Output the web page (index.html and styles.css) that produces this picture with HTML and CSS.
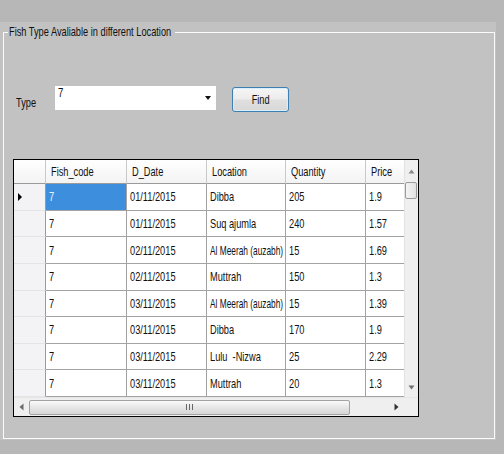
FILE: index.html
```html
<!DOCTYPE html>
<html>
<head>
<meta charset="utf-8">
<title>Fish Type</title>
<link rel="stylesheet" href="styles.css">
</head>
<body>
<div class="client">
  <fieldset class="group">
    <legend class="group-title"><span class="tx">Fish Type Avaliable in different Location</span></legend>
    <div class="search-row">
      <label class="type-label"><span class="tx">Type</span></label>
      <div class="combo"><span class="tx combo-value">7</span><span class="combo-arrow"></span></div>
      <button class="find-btn"><span class="tx tx-c">Find</span></button>
    </div>
    <div class="grid-view">
      <div class="grid-body">
        <div class="cells">
          <div class="hdr corner-hdr"></div>
          <div class="hdr"><span class="tx">Fish_code</span></div>
          <div class="hdr"><span class="tx">D_Date</span></div>
          <div class="hdr"><span class="tx">Location</span></div>
          <div class="hdr"><span class="tx">Quantity</span></div>
          <div class="hdr last"><span class="tx">Price</span></div>

          <div class="rowhdr"><span class="current"></span></div>
          <div class="cell selected"><span class="tx">7</span></div><div class="cell"><span class="tx">01/11/2015</span></div><div class="cell"><span class="tx">Dibba</span></div><div class="cell"><span class="tx">205</span></div><div class="cell last"><span class="tx">1.9</span></div>

          <div class="rowhdr"></div>
          <div class="cell"><span class="tx">7</span></div><div class="cell"><span class="tx">01/11/2015</span></div><div class="cell"><span class="tx">Suq ajumla</span></div><div class="cell"><span class="tx">240</span></div><div class="cell last"><span class="tx">1.57</span></div>

          <div class="rowhdr"></div>
          <div class="cell"><span class="tx">7</span></div><div class="cell"><span class="tx">02/11/2015</span></div><div class="cell"><span class="tx tx-tight">Al Meerah (auzabh)</span></div><div class="cell"><span class="tx">15</span></div><div class="cell last"><span class="tx">1.69</span></div>

          <div class="rowhdr"></div>
          <div class="cell"><span class="tx">7</span></div><div class="cell"><span class="tx">02/11/2015</span></div><div class="cell"><span class="tx">Muttrah</span></div><div class="cell"><span class="tx">150</span></div><div class="cell last"><span class="tx">1.3</span></div>

          <div class="rowhdr"></div>
          <div class="cell"><span class="tx">7</span></div><div class="cell"><span class="tx">03/11/2015</span></div><div class="cell"><span class="tx tx-tight">Al Meerah (auzabh)</span></div><div class="cell"><span class="tx">15</span></div><div class="cell last"><span class="tx">1.39</span></div>

          <div class="rowhdr"></div>
          <div class="cell"><span class="tx">7</span></div><div class="cell"><span class="tx">03/11/2015</span></div><div class="cell"><span class="tx">Dibba</span></div><div class="cell"><span class="tx">170</span></div><div class="cell last"><span class="tx">1.9</span></div>

          <div class="rowhdr"></div>
          <div class="cell"><span class="tx">7</span></div><div class="cell"><span class="tx">03/11/2015</span></div><div class="cell"><span class="tx">Lulu &nbsp;-Nizwa</span></div><div class="cell"><span class="tx">25</span></div><div class="cell last"><span class="tx">2.29</span></div>

          <div class="rowhdr"></div>
          <div class="cell"><span class="tx">7</span></div><div class="cell"><span class="tx">03/11/2015</span></div><div class="cell"><span class="tx">Muttrah</span></div><div class="cell"><span class="tx">20</span></div><div class="cell last"><span class="tx">1.3</span></div>
        </div>
        <div class="vscroll">
          <div class="sb-btn sb-up"><svg width="7" height="5" viewBox="0 0 7 5"><path d="M0.5 4.5 L3.5 0.5 L6.5 4.5 Z" fill="#8a8a8a"/></svg></div>
          <div class="v-thumb"></div>
          <div class="v-track"></div>
          <div class="sb-btn sb-down"><svg width="7" height="5" viewBox="0 0 7 5"><path d="M0.5 0.5 L3.5 4.5 L6.5 0.5 Z" fill="#707070"/></svg></div>
        </div>
      </div>
      <div class="hscroll-row">
        <div class="hscroll">
          <div class="sb-btn sb-left"><svg width="5" height="8" viewBox="0 0 5 8"><path d="M4.5 0.5 L0.5 4 L4.5 7.5 Z" fill="#6a6a6a"/></svg></div>
          <div class="h-thumb"><span class="grip"></span><span class="grip"></span><span class="grip"></span></div>
          <div class="h-track"></div>
          <div class="sb-btn sb-right"><svg width="5" height="8" viewBox="0 0 5 8"><path d="M0.5 0.5 L4.5 4 L0.5 7.5 Z" fill="#333"/></svg></div>
        </div>
        <div class="sb-corner"></div>
      </div>
    </div>
  </fieldset>
</div>
</body>
</html>
```
FILE: styles.css
```css
html, body {
  margin: 0;
  padding: 0;
}
body {
  width: 504px;
  height: 454px;
  overflow: hidden;
  background: #b7b7b7;
  font-family: "Liberation Sans", Arial, sans-serif;
  font-size: 13px;
  color: #111;
}
/* the reference font is a horizontally condensed sans */
.tx {
  display: inline-block;
  white-space: nowrap;
  transform: scaleX(0.71);
  transform-origin: left center;
}
.tx-c {
  transform-origin: center center;
}
.tx-tight {
  transform: scaleX(0.64);
}
.client {
  margin-top: 22px;
  width: 496px;
  height: 418px;
  background: #c2c2c2;
  padding-top: 3px;
  box-sizing: border-box;
}
.group {
  margin: 0 0 0 3px;
  padding: 0;
  width: 492px;
  box-sizing: border-box;
  border: 1px solid #fbfbfb;
  min-width: 0;
}
.group-title {
  margin-left: 4px;
  padding: 0 1px;
  width: 167px;
  box-sizing: border-box;
  line-height: 14px;
  white-space: nowrap;
  overflow: visible;
  color: #111;
}
.search-row {
  display: flex;
  align-items: flex-start;
  margin-top: 47px;
  padding-left: 12px;
}
.type-label {
  width: 39px;
  margin-top: 10px;
  line-height: 14px;
}
.combo {
  width: 161px;
  height: 24px;
  background: #fff;
  box-sizing: border-box;
  padding-left: 3px;
  line-height: 14px;
  font-size: 13.5px;
  display: flex;
  justify-content: space-between;
}
.combo-arrow {
  margin: 10px 5px 0 0;
  width: 0;
  height: 0;
  border-left: 3px solid transparent;
  border-right: 3px solid transparent;
  border-top: 4px solid #111;
}
.find-btn {
  margin: 1px 0 0 16px;
  width: 57px;
  height: 25px;
  padding: 0;
  border: 1px solid #3d7fb0;
  border-radius: 3px;
  background: linear-gradient(#f6f6f6 0%, #ececec 48%, #dfdfdf 52%, #d8d8d8 100%);
  box-shadow: inset 0 0 0 1px #d8eefa;
  font-family: inherit;
  font-size: 13px;
  color: #111;
}
.grid-view {
  margin: 47px 0 21px 9px;
  width: 406px;
  height: 258px;
  box-sizing: border-box;
  border: 1px solid #000;
  background: #fff;
}
.grid-body {
  display: flex;
  height: 237px;
}
.cells {
  width: 390px;
  overflow: hidden;
  display: grid;
  grid-template-columns: 32px 81px 80px 79px 80px 38px;
  grid-template-rows: 24px repeat(8, 26.625px);
}
.hdr, .cell, .rowhdr {
  box-sizing: border-box;
  border-right: 1px solid #a3a3a3;
  border-bottom: 1px solid #a3a3a3;
  white-space: nowrap;
  overflow: hidden;
  display: flex;
  align-items: center;
}
.hdr {
  padding-left: 5px;
  background: linear-gradient(#ffffff, #f3f3f3);
  border-right-color: #c9c9c9;
  border-bottom-color: #9a9a9a;
}
.cell {
  padding-left: 3px;
  background: #fff;
}
.cell.selected {
  background: #3d8fde;
  color: #eaf3ff;
}
.rowhdr {
  background: #f3f3f6;
  border-bottom-color: #e3e3e8;
  border-right-color: #9a9a9a;
  padding-left: 4px;
}
.hdr.last, .cell.last {
  border-right: none;
}
.current {
  width: 0;
  height: 0;
  border-left: 4px solid #000;
  border-top: 4px solid transparent;
  border-bottom: 4px solid transparent;
}
.vscroll {
  width: 14px;
  display: flex;
  flex-direction: column;
  background: #efefef;
  border-left: 1px solid #e2e2e2;
  box-sizing: border-box;
}
.sb-btn {
  display: flex;
  align-items: center;
  justify-content: center;
}
.sb-up {
  height: 22px;
}
.sb-down {
  height: 20px;
}
.v-thumb {
  height: 17px;
  margin: 0 1px 0 0;
  border: 1px solid #9b9b9b;
  border-radius: 2px;
  background: linear-gradient(90deg, #f4f4f4, #e2e2e2);
  box-sizing: border-box;
}
.v-track {
  flex: 1;
}
.hscroll-row {
  display: flex;
  height: 19px;
  border-top: 1px solid #e6e6e6;
  box-sizing: border-box;
}
.hscroll {
  width: 390px;
  display: flex;
  align-items: center;
  background: #efefef;
}
.sb-left {
  width: 15px;
  height: 100%;
}
.sb-right {
  width: 16px;
  height: 100%;
}
.h-thumb {
  width: 321px;
  height: 15px;
  box-sizing: border-box;
  border: 1px solid #a3a3a3;
  border-radius: 2px;
  background: linear-gradient(#fafafa, #e6e6e6 50%, #d6d6d6);
  display: flex;
  justify-content: center;
  align-items: center;
  gap: 2px;
}
.grip {
  width: 1px;
  height: 6px;
  background: #666;
}
.h-track {
  flex: 1;
}
.sb-corner {
  width: 14px;
  background: #efefef;
}
```
